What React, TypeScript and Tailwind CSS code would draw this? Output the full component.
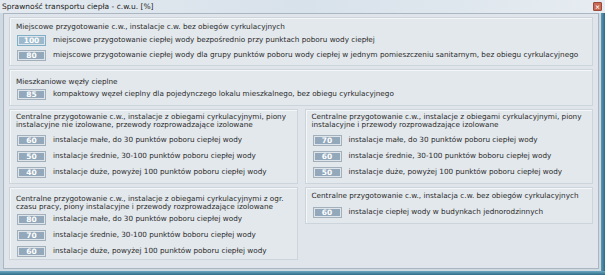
import React from "react";

const font = { fontFamily: '"DejaVu Sans", Verdana, sans-serif' };

function Btn({ v, focus }: { v: string; focus?: boolean }) {
  return (
    <div
      className={`w-[29px] h-[11px] shrink-0 border ${focus ? "border-[#7fb0c8]" : "border-[#a3afba]"} bg-[#dde4ea] p-[1px] flex`}
    >
      <div className={`flex-1 flex items-center justify-center ${focus ? "bg-[#9cb8cc]" : "bg-[#93a8ba]"} text-white text-[7.5px] font-bold leading-none`}>
        {v}
      </div>
    </div>
  );
}

function Row({ v, t, focus }: { v: string; t: string; focus?: boolean }) {
  return (
    <div className="flex items-center gap-[7px] h-[11px]">
      <Btn v={v} focus={focus} />
      <span className="whitespace-nowrap">{t}</span>
    </div>
  );
}

function Group({
  title,
  children,
  className = "",
  titleClass = "pt-[3px] pb-[6px]",
  gap = "gap-[5px]",
}: {
  title: React.ReactNode;
  children: React.ReactNode;
  className?: string;
  titleClass?: string;
  gap?: string;
}) {
  return (
    <div className={`border border-[#cdd5dc] shadow-[inset_1px_1px_0_#f4f6f8] bg-[#e3e8ed] pl-[6px] pr-[4px] ${className}`}>
      <div className={`leading-[8px] ${titleClass}`}>{title}</div>
      <div className={`flex flex-col ${gap} pl-[1px]`}>{children}</div>
    </div>
  );
}

export default function App() {
  return (
    <div className="w-[605px] h-[275px] bg-[#cfd9e2] text-[#2a2a2a] text-[7.25px] relative overflow-hidden" style={font}>
      <div className="h-[13px] bg-gradient-to-r from-[#e3e9ef] via-[#d8e2eb] to-[#e6ecf1] flex items-center pl-[2px] text-[7.5px] text-[#1c1c1c]">
        <span>Sprawność transportu ciepła - c.w.u. [%]</span>
      </div>
      <div className="absolute right-[3px] top-[2px] w-[9px] h-[9px] bg-[#c96a55] border border-[#9a4a3a] rounded-[1px] flex items-center justify-center text-white text-[6px] font-bold leading-none">×</div>
      <div className="ml-[3px] mr-[6px] h-[256px] border border-[#aab6c1] bg-[#dfe5ea] px-[5px] pt-[3px] flex flex-col gap-[3px]">
        <Group title="Miejscowe przygotowanie c.w., instalacje c.w. bez obiegów cyrkulacyjnych" className="h-[49px]" titleClass="pt-[5px] pb-[4px]" gap="gap-[4px]">
          <Row focus v="100" t="miejscowe przygotowanie ciepłej wody bezpośrednio przy punktach poboru wody ciepłej" />
          <Row v="80" t="miejscowe przygotowanie ciepłej wody dla grupy punktów poboru wody ciepłej w jednym pomieszczeniu sanitarnym, bez obiegu cyrkulacyjnego" />
        </Group>
        <Group title="Mieszkaniowe węzły cieplne" className="h-[37px]" titleClass="pt-[8px] pb-[3px]">
          <Row v="85" t="kompaktowy węzeł cieplny dla pojedynczego lokalu mieszkalnego, bez obiegu cyrkulacyjnego" />
        </Group>
        <div className="grid grid-cols-2 gap-x-[7px] gap-y-[3px]">
          <Group className="h-[75px]" title={<>Centralne przygotowanie c.w., instalacje z obiegami cyrkulacyjnymi, piony<br />instalacyjne nie izolowane, przewody rozprowadzające izolowane</>}>
            <Row v="60" t="instalacje małe, do 30 punktów poboru ciepłej wody" />
            <Row v="50" t="instalacje średnie, 30-100 punktów poboru ciepłej wody" />
            <Row v="40" t="instalacje duże, powyżej 100 punktów poboru ciepłej wody" />
          </Group>
          <Group className="h-[75px]" title={<>Centralne przygotowanie c.w., instalacje z obiegami cyrkulacyjnymi, piony<br />instalacyjne i przewody rozprowadzające izolowane</>}>
            <Row v="70" t="instalacje małe, do 30 punktów poboru ciepłej wody" />
            <Row v="60" t="instalacje średnie, 30-100 punktów boboru ciepłej wody" />
            <Row v="50" t="instalacje duże, powyżej 100 punktów poboru ciepłej wody" />
          </Group>
          <Group className="h-[73px]" titleClass="pt-[7px] pb-[3px]" title={<>Centralne przygotowanie c.w., instalacje z obiegami cyrkulacyjnymi z ogr.<br />czasu pracy, piony instalacyjne i przewody rozprowadzające izolowane</>}>
            <Row v="80" t="instalacje małe, do 30 punktów poboru ciepłej wody" />
            <Row v="70" t="instalacje średnie, 30-100 punktów boboru ciepłej wody" />
            <Row v="60" t="instalacje duże, powyżej 100 punktów poboru ciepłej wody" />
          </Group>
          <div>
            <Group className="h-[37px]" titleClass="pt-[4px] pb-[7px]" title="Centralne przygotowanie c.w., instalacja c.w. bez obiegów cyrkulacyjnych">
              <Row v="60" t="instalacje ciepłej wody w budynkach jednorodzinnych" />
            </Group>
          </div>
        </div>
      </div>
      <div className="absolute right-0 top-[13px] bottom-0 w-[4px] bg-gradient-to-r from-[#5d9ab4] to-[#2d6a86]" />
      <div className="absolute left-0 right-0 bottom-0 h-[4px] bg-gradient-to-b from-[#6aa8c0] to-[#2f6d88]" />
    </div>
  );
}
